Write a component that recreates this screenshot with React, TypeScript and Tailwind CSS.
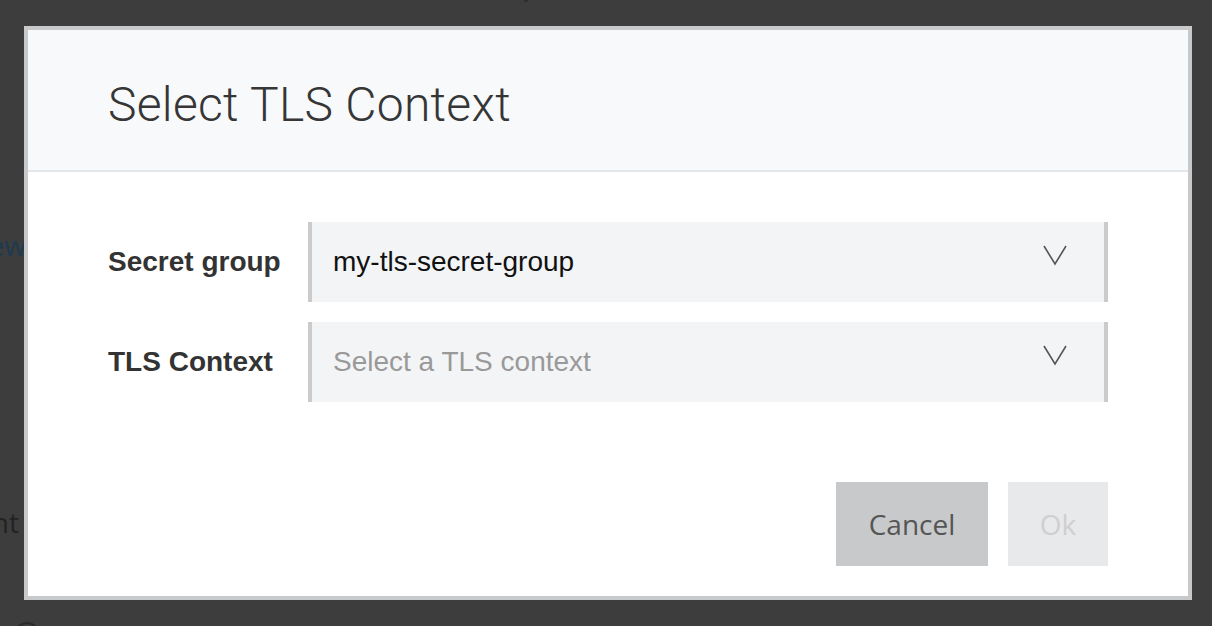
import { ReactNode } from "react";

function Chevron() {
  return (
    <svg width="26" height="22" viewBox="0 0 26 22" fill="none" className="shrink-0 -mt-[14px]">
      <polyline points="2,2 13,20 24,2" stroke="#555" strokeWidth="1.6" />
    </svg>
  );
}

function Field({ label, children }: { label: string; children: ReactNode }) {
  return (
    <div className="flex items-center">
      <div className="w-[200px] text-[28px] font-bold text-[#333] font-['Liberation_Sans',Arial,sans-serif]">
        {label}
      </div>
      <div className="flex-1 h-[80px] flex items-center justify-between bg-[#f3f4f6] border-x-4 border-[#cbcbcb] pl-[21px] pr-[36px]">
        {children}
        <Chevron />
      </div>
    </div>
  );
}

export default function App() {
  return (
    <div className="relative w-[1212px] h-[626px] bg-[#3d3d3d] overflow-hidden">
      {/* page behind the overlay */}
      <div className="absolute right-[1186px] top-[224px] text-[28px] text-[#1d3a52] font-['Open_Sans',sans-serif] whitespace-nowrap">
        View
      </div>
      <div className="absolute right-[1193px] top-[501px] text-[28px] text-[#222] font-['Open_Sans',sans-serif] whitespace-nowrap">
        Content
      </div>
      <div className="absolute left-[14px] top-[622px] w-[26px] h-[26px] rounded-full border-2 border-[#2a2a2a]" />
      <div className="absolute left-[524px] top-0 w-[4px] h-[2px] bg-[#2e2e2e]" />

      <div className="relative z-10 pt-[26px] pl-[24px]">
        <div className="w-[1168px] h-[574px] border-4 border-[#c8c9cb] bg-white flex flex-col">
          <div className="h-[142px] shrink-0 bg-[#f8f9fb] border-b-2 border-[#e6e7ea] flex items-center pl-[80px] pt-[9px]">
            <h1 className="text-[48px] font-light text-[#363636] tracking-[0.3px] font-['Roboto',sans-serif]">
              Select TLS Context
            </h1>
          </div>

          <div className="flex flex-col gap-[20px] px-[80px] pt-[50px]">
            <Field label="Secret group">
              <span className="text-[28px] text-[#111] font-['Liberation_Sans',Arial,sans-serif]">
                my-tls-secret-group
              </span>
            </Field>
            <Field label="TLS Context">
              <span className="text-[28px] text-[#999] font-['Liberation_Sans',Arial,sans-serif]">
                Select a TLS context
              </span>
            </Field>
          </div>

          <div className="flex justify-end gap-[20px] px-[80px] mt-[80px] font-['Open_Sans',sans-serif] text-[28px]">
            <button className="w-[152px] h-[84px] bg-[#c8c9cb] text-[#555]">Cancel</button>
            <button className="w-[100px] h-[84px] bg-[#e8e9eb] text-[#cfcfcf]">Ok</button>
          </div>
        </div>
      </div>
    </div>
  );
}
